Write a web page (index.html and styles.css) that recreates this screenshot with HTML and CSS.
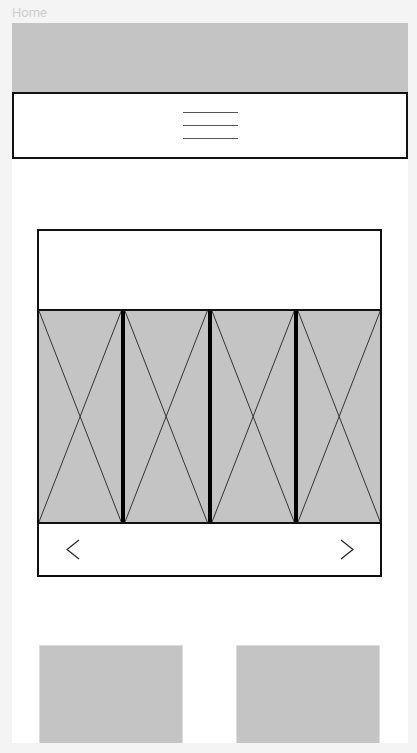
FILE: index.html
```html
<!DOCTYPE html>
<html lang="en">
<head>
    <meta charset="UTF-8">
    <meta name="viewport" content="width=device-width, initial-scale=1.0">
    <title>Home</title>
    <link rel="stylesheet" href="styles.css">
</head>
<body>
    <div class="page-label">Home</div>
    <div class="frame">
        <div class="hero"></div>
        <div class="nav">
            <div class="burger">
                <span></span>
                <span></span>
                <span></span>
            </div>
        </div>

        <div class="carousel">
            <div class="carousel-head"></div>
            <div class="slides">
                <div class="slide">
                    <svg viewBox="0 0 100 100" preserveAspectRatio="none"><line x1="0" y1="0" x2="100" y2="100"/><line x1="100" y1="0" x2="0" y2="100"/></svg>
                </div>
                <div class="slide">
                    <svg viewBox="0 0 100 100" preserveAspectRatio="none"><line x1="0" y1="0" x2="100" y2="100"/><line x1="100" y1="0" x2="0" y2="100"/></svg>
                </div>
                <div class="slide">
                    <svg viewBox="0 0 100 100" preserveAspectRatio="none"><line x1="0" y1="0" x2="100" y2="100"/><line x1="100" y1="0" x2="0" y2="100"/></svg>
                </div>
                <div class="slide">
                    <svg viewBox="0 0 100 100" preserveAspectRatio="none"><line x1="0" y1="0" x2="100" y2="100"/><line x1="100" y1="0" x2="0" y2="100"/></svg>
                </div>
            </div>
            <div class="carousel-nav">
                <svg class="arrow" viewBox="0 0 14 21"><polyline points="13,1 1,10.5 13,20"/></svg>
                <svg class="arrow" viewBox="0 0 14 21"><polyline points="1,1 13,10.5 1,20"/></svg>
            </div>
        </div>

        <div class="tiles">
            <div class="tile"></div>
            <div class="tile"></div>
        </div>
    </div>
</body>
</html>
```

FILE: styles.css
```css
* {
    margin: 0;
    padding: 0;
    box-sizing: border-box;
}

body {
    background: #f4f4f4;
    font-family: Roboto, 'Liberation Sans', sans-serif;
    height: 753px;
    overflow: hidden;
}

.page-label {
    height: 23px;
    padding: 5px 0 0 12px;
    font-size: 13px;
    line-height: 16px;
    color: #cdcdcd;
}

.frame {
    width: 396px;
    height: 720px;
    margin-left: 12px;
    background: #fff;
    overflow: hidden;
}

.hero {
    height: 69px;
    background: #c4c4c4;
}

.nav {
    height: 67px;
    border: 2px solid #111;
    display: flex;
    justify-content: center;
    align-items: center;
}

.burger {
    display: flex;
    flex-direction: column;
    gap: 12px;
    margin-top: -1px;
}

.burger span {
    display: block;
    width: 55px;
    height: 1px;
    background: #555;
}

.carousel {
    width: 345px;
    margin: 70px 0 0 25px;
    border: 2px solid #111;
}

.carousel-head {
    height: 80px;
    border-bottom: 2px solid #111;
}

.slides {
    display: flex;
    gap: 4px;
    height: 213px;
    background: #000;
    border-bottom: 2px solid #111;
}

.slide {
    flex: 1;
    background: #c4c4c4;
}

.slide svg {
    display: block;
    width: 100%;
    height: 100%;
}

.slide line {
    stroke: #333;
    stroke-width: 1;
    vector-effect: non-scaling-stroke;
}

.carousel-nav {
    height: 51px;
    display: flex;
    justify-content: space-between;
    align-items: center;
    padding: 0 26px 0 27px;
}

.arrow {
    width: 14px;
    height: 21px;
    fill: none;
    stroke: #222;
    stroke-width: 1.2;
}

.tiles {
    display: flex;
    gap: 53px;
    margin: 68px 0 0 27px;
}

.tile {
    width: 144px;
    height: 100px;
    background: #c4c4c4;
    border: 1px solid #dcdcdc;
}
```
